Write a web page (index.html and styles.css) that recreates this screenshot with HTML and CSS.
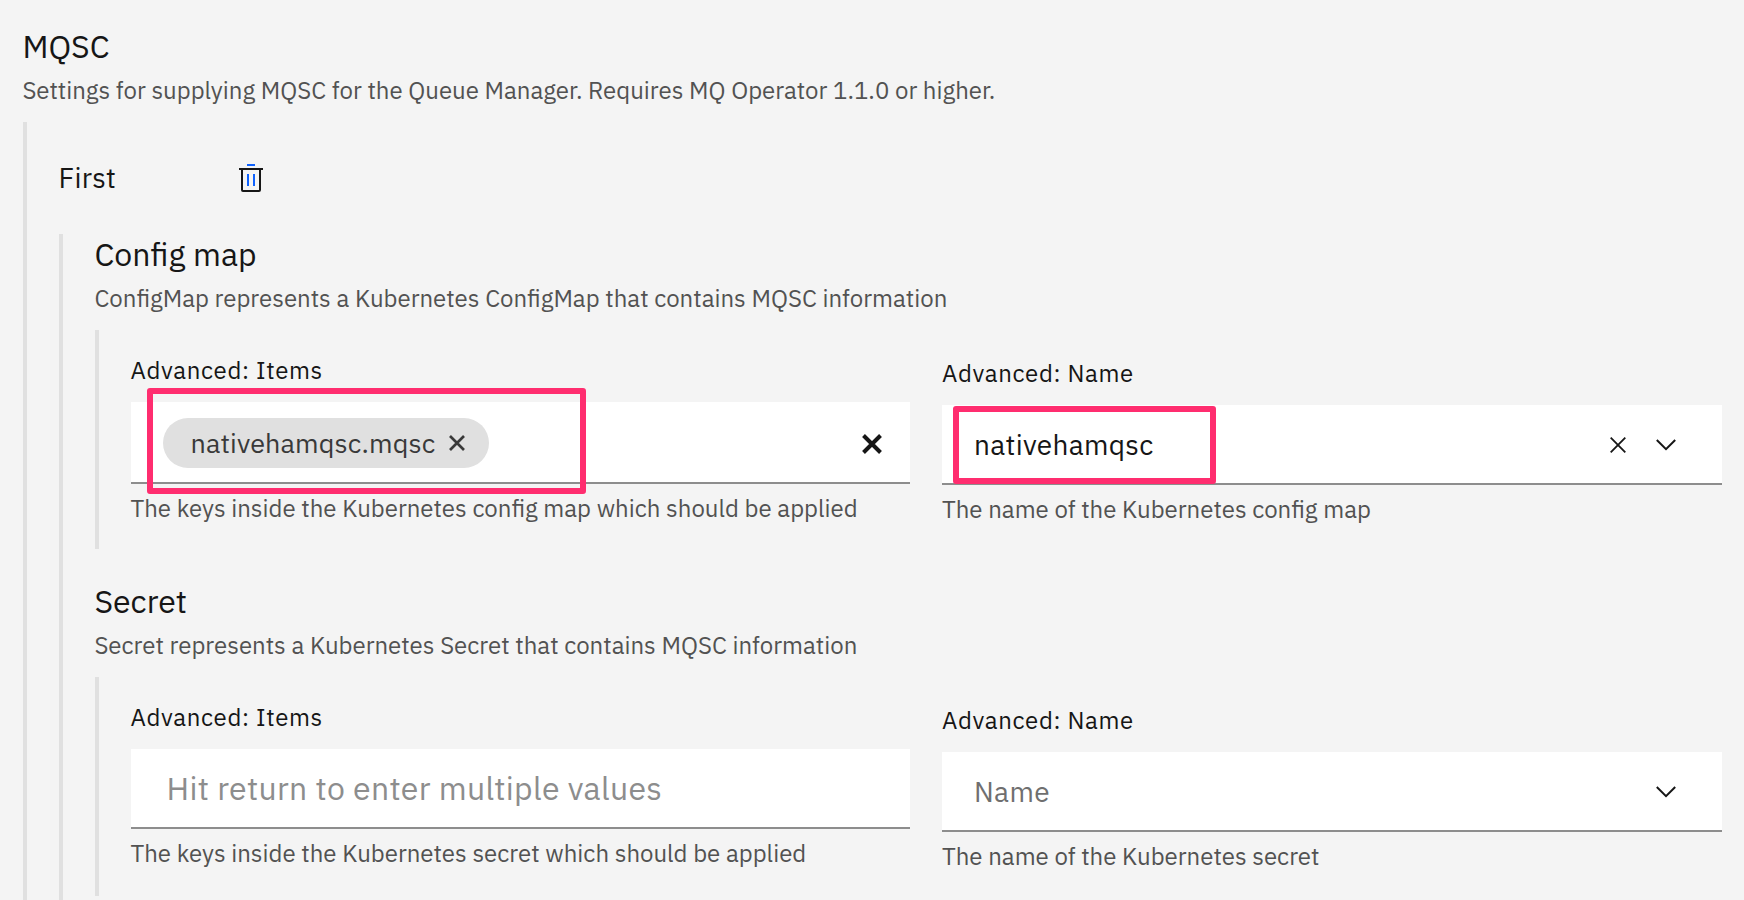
FILE: index.html
```html
<!DOCTYPE html>
<html lang="en">
<head>
<meta charset="utf-8">
<title>MQSC</title>
<link rel="stylesheet" href="styles.css">
</head>
<body>
<main class="form">
  <h2 class="title">MQSC</h2>
  <p class="desc">Settings for supplying MQSC for the Queue Manager. Requires MQ Operator 1.1.0 or higher.</p>
  <div class="nest nest-outer">
    <div class="item-head">
      <span class="item-name">First</span>
      <svg class="trash" width="24" height="28" viewBox="0 0 24 28" fill="none" stroke-width="2">
        <path d="M0 5H24M3 5V26Q3 27 4 27H20Q21 27 21 26V5" stroke="#161616"/>
        <path d="M8 1H16M9 10V22M15 10V22" stroke="#0f62fe"/>
      </svg>
    </div>
    <div class="nest nest-item">
      <section class="group">
        <h3 class="title">Config map</h3>
        <p class="desc">ConfigMap represents a Kubernetes ConfigMap that contains MQSC information</p>
        <div class="nest nest-fields">
          <div class="field">
            <label class="label">Advanced: Items</label>
            <div class="control control-tags">
              <span class="tag">nativehamqsc.mqsc
                <svg width="16" height="16" viewBox="0 0 16 16" fill="none" stroke="#393939" stroke-width="2.7"><path d="M1 1L15 15M15 1L1 15"/></svg>
              </span>
              <svg class="clear-all" width="20" height="20" viewBox="0 0 20 20" fill="none" stroke="#161616" stroke-width="4"><path d="M1.5 1.5L18.5 18.5M18.5 1.5L1.5 18.5"/></svg>
              <span class="mark mark-items"></span>
            </div>
            <p class="helper">The keys inside the Kubernetes config map which should be applied</p>
          </div>
          <div class="field field-combo">
            <label class="label">Advanced: Name</label>
            <div class="control control-combo">
              <span class="value">nativehamqsc</span>
              <svg class="clear" width="16" height="16" viewBox="0 0 16 16" fill="none" stroke="#161616" stroke-width="1.8"><path d="M.7 .7L15.3 15.3M15.3 .7L.7 15.3"/></svg>
              <svg width="20" height="12" viewBox="0 0 20 12" fill="none" stroke="#161616" stroke-width="2"><path d="M.8 1L10 10.2L19.2 1"/></svg>
              <span class="mark mark-name"></span>
            </div>
            <p class="helper">The name of the Kubernetes config map</p>
          </div>
        </div>
      </section>
      <section class="group">
        <h3 class="title">Secret</h3>
        <p class="desc">Secret represents a Kubernetes Secret that contains MQSC information</p>
        <div class="nest nest-fields">
          <div class="field">
            <label class="label">Advanced: Items</label>
            <div class="control control-empty">
              <span class="hint">Hit return to enter multiple values</span>
            </div>
            <p class="helper">The keys inside the Kubernetes secret which should be applied</p>
          </div>
          <div class="field field-combo">
            <label class="label">Advanced: Name</label>
            <div class="control control-combo">
              <span class="value value-empty">Name</span>
              <svg width="20" height="12" viewBox="0 0 20 12" fill="none" stroke="#161616" stroke-width="2"><path d="M.8 1L10 10.2L19.2 1"/></svg>
            </div>
            <p class="helper">The name of the Kubernetes secret</p>
          </div>
        </div>
      </section>
    </div>
  </div>
</main>
</body>
</html>
```
FILE: styles.css
```css
* { box-sizing: border-box; }
html { background: #f4f4f4; }
body {
  margin: 0;
  background: #f4f4f4;
  color: #161616;
  font-family: "IBM Plex Sans", Roboto, sans-serif;
}
h2, h3, p { margin: 0; font-weight: 400; }
svg { display: block; flex: none; }

.form { padding: 26px 22px 0 23px; }
.title { font-size: 32px; line-height: 40px; text-indent: -.6px; }
.desc {
  margin: 8px 0 16px;
  color: #525252;
  font-size: 24px;
  line-height: 32px;
  text-indent: -.6px;
}

.nest { border-left: 4px solid #e0e0e0; padding-left: 32px; }
.nest-outer { padding-top: 38px; }
.nest-item { padding-bottom: 4px; }
.nest-fields {
  display: grid;
  grid-template-columns: 779px 780px;
  column-gap: 32px;
  align-items: start;
  height: 219px;
  padding-top: 24px;
}
.group + .group { margin-top: 32px; }

.item-head { display: flex; align-items: flex-start; height: 74px; }
.item-name { width: 180px; font-size: 28px; line-height: 35px; letter-spacing: .32px; text-indent: -.6px; }
.trash { margin-top: 4px; }

.field { text-indent: -.5px; }
.field-combo { padding-top: 3px; text-indent: 0; }
.label {
  display: block;
  margin-bottom: 16px;
  font-size: 24px;
  line-height: 32px;
  letter-spacing: .64px;
}
.control {
  position: relative;
  display: flex;
  align-items: center;
  height: 80px;
  background: #fff;
  border-bottom: 2px solid #8d8d8d;
  text-indent: 0;
}
.control-tags {
  height: 82px;
  justify-content: space-between;
  padding: 2px 28px 0 32px;
}
.control-empty { padding-left: 35.5px; }
.control-combo { padding: 2px 46px 0 32px; }
.tag {
  display: flex;
  align-items: center;
  justify-content: space-between;
  width: 326px;
  height: 50px;
  padding: 0 24px 0 27.5px;
  border-radius: 25px;
  background: #e0e0e0;
  color: #393939;
  font-size: 27px;
  line-height: 34px;
  letter-spacing: .12px;
}
.clear-all { margin-top: 2px; }
.value { margin-right: auto; font-size: 28px; line-height: 36px; letter-spacing: .32px; }
.value-empty { color: #6f6f6f; }
.hint { color: #8d8d8d; font-size: 32px; line-height: 40px; letter-spacing: .32px; }
.clear { margin-right: 30px; }
.helper {
  margin-top: 8px;
  color: #525252;
  font-size: 24px;
  line-height: 32px;
}

/* Highlight frames drawn over the fields */
.mark {
  position: absolute;
  border: 6px solid #ff2d6f;
  border-radius: 3px;
}
.mark-items { left: 16px; top: -14px; width: 439px; height: 106px; }
.mark-name { left: 11px; top: 1px; width: 263px; height: 78px; }
```
